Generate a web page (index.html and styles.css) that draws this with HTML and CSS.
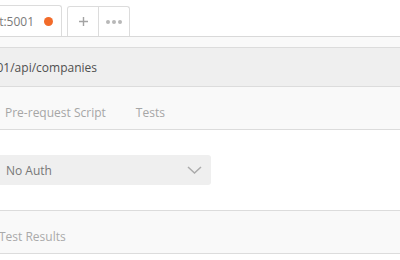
FILE: index.html
```html
<!DOCTYPE html>
<html>
<head>
	<meta charset="utf-8">
	<title>Request</title>
	<link rel="stylesheet" href="styles.css">
</head>
<body>

	<div class="tabbar">
		<div class="tab active">
			<span class="tab-name">GET localhost:5001</span>
			<span class="dirty-dot"></span>
		</div>
		<div class="tab-actions">
			<div class="tab-btn">
				<svg width="11" height="11" viewBox="0 0 11 11"><path d="M5.5 1v9M1 5.5h9" stroke="#a3a3a3" stroke-width="1.4" fill="none"/></svg>
			</div>
			<div class="tab-btn">
				<span class="dot"></span><span class="dot"></span><span class="dot"></span>
			</div>
		</div>
	</div>

	<div class="strip"></div>

	<div class="url-row">
		<div class="url-text"><span>http://localhost:5001/api/companies</span></div>
	</div>

	<div class="sub-tabs">
		<span class="sub-tab">Pre-request Script</span>
		<span class="sub-tab">Tests</span>
	</div>

	<div class="auth-pane">
		<div class="select">
			<span class="select-label">No Auth</span>
			<svg width="15" height="8" viewBox="0 0 15 8"><path d="M1 1l6.5 6 6.5-6" stroke="#ababab" stroke-width="1.5" fill="none"/></svg>
		</div>
	</div>

	<div class="results">
		<span class="results-title">Test Results</span>
	</div>

</body>
</html>
```

FILE: styles.css
```css
body {
	margin: 0;
	font-family: "Open Sans", "Liberation Sans", sans-serif;
	font-size: 12px;
	background: #ffffff;
	overflow: hidden;
}

/* request tabs */
.tabbar {
	display: flex;
	align-items: flex-end;
	height: 31px;
	padding-top: 5px;
	border-bottom: 1px solid #d9d9d9;
}

.tab {
	display: flex;
	align-items: center;
	height: 29px;
	background: #ffffff;
	border: 1px solid #dcdcdc;
	border-bottom: none;
	border-radius: 0 3px 0 0;
}

.tab.active {
	width: 62px;
	justify-content: flex-end;
	padding-right: 8px;
	border-left: none;
	box-sizing: border-box;
	height: 31px;
}

.tab-name {
	flex-shrink: 0;
	white-space: nowrap;
	color: #7a7a7a;
	padding-top: 1px;
}

.dirty-dot {
	flex-shrink: 0;
	width: 9px;
	height: 9px;
	margin-left: 10px;
	border-radius: 50%;
	background: #f26b2a;
}

.tab-actions {
	display: flex;
	height: 30px;
	margin-left: 5px;
	border: 1px solid #dcdcdc;
	border-bottom: none;
	border-radius: 3px 3px 0 0;
	box-sizing: border-box;
}

.tab-btn {
	display: flex;
	align-items: center;
	justify-content: center;
	gap: 2px;
	width: 30px;
}

.tab-btn + .tab-btn {
	border-left: 1px solid #dcdcdc;
}

.dot {
	width: 4px;
	height: 4px;
	border-radius: 50%;
	background: #b8b8b8;
}

/* url */
.strip {
	height: 10px;
	background: #f9f9f9;
	border-bottom: 1px solid #dcdcdc;
}

.url-row {
	display: flex;
	align-items: center;
	height: 38px;
	background: #efefef;
	border-bottom: 1px solid #dcdcdc;
}

.url-text {
	display: flex;
	justify-content: flex-end;
	width: 97px;
	color: #505050;
}

.url-text span {
	flex-shrink: 0;
	white-space: nowrap;
}

/* request sections */
.sub-tabs {
	display: flex;
	align-items: center;
	gap: 30px;
	height: 34px;
	padding: 8px 0 0 5px;
	background: #f9f9f9;
	border-bottom: 1px solid #dcdcdc;
}

.sub-tab {
	color: #a6a6a6;
}

.auth-pane {
	height: 81px;
	padding-top: 25px;
	box-sizing: border-box;
	border-bottom: 1px solid #dcdcdc;
}

.select {
	display: flex;
	align-items: center;
	justify-content: space-between;
	width: 211px;
	height: 30px;
	padding: 0 9px 0 6px;
	box-sizing: border-box;
	background: #efefef;
	border-radius: 0 3px 3px 0;
	color: #777777;
}

/* test results */
.results {
	display: flex;
	align-items: center;
	height: 34px;
	padding-top: 8px;
	background: #f9f9f9;
	border-bottom: 1px solid #dcdcdc;
}

.results-title {
	color: #aaaaaa;
	text-indent: -1px;
}
```
